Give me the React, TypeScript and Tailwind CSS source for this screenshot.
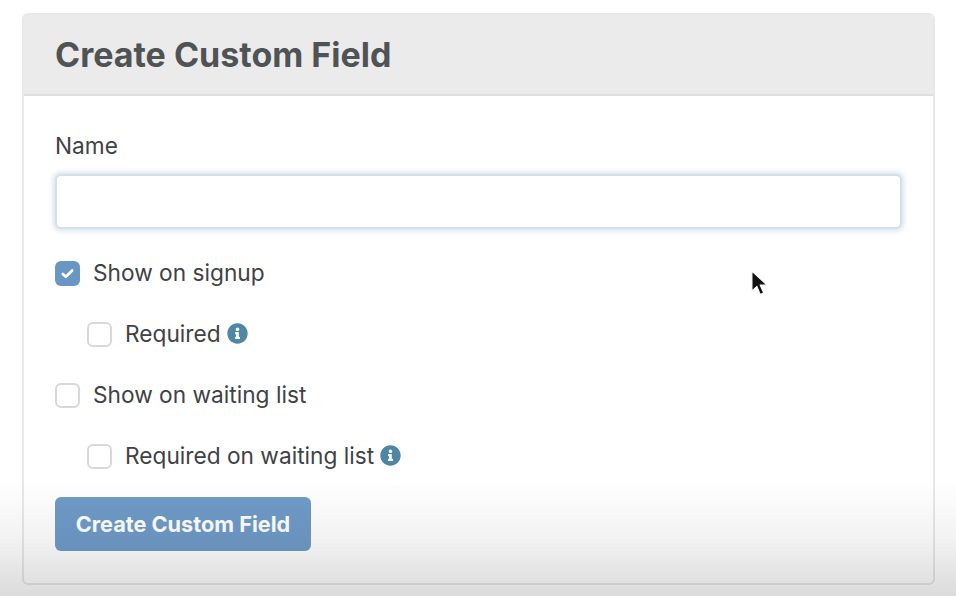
import React from 'react';

const InfoIcon = () => (
  <svg viewBox="0 0 512 512" className="w-[21px] h-[21px] ml-[6px] mt-[-1px]" fill="#4f86a4">
    <path d="M256 8C119 8 8 119 8 256s111 248 248 248 248-111 248-248S393 8 256 8zm0 100c24 0 44 20 44 44s-20 44-44 44-44-20-44-44 20-44 44-44zm60 268c0 7-5 12-12 12h-96c-7 0-12-5-12-12v-28c0-7 5-12 12-12h12v-62h-12c-7 0-12-5-12-12v-28c0-7 5-12 12-12h68c7 0 12 5 12 12v102h16c7 0 12 5 12 12v28z" />
  </svg>
);

const Check = ({ label, checked, info, indent }: { label: string; checked?: boolean; info?: boolean; indent?: boolean }) => (
  <div className={`flex items-center h-[26px] ${indent ? 'ml-[32px]' : ''}`}>
    {checked ? (
      <div className="w-[25px] h-[25px] rounded-[6px] bg-[#6a96c3] flex items-center justify-center shrink-0">
        <svg viewBox="0 0 16 16" className="w-[15px] h-[15px]" fill="none" stroke="#ffffff" strokeWidth="2.8" strokeLinecap="round" strokeLinejoin="round">
          <path d="M3 8.5l3.2 3L13 4.8" />
        </svg>
      </div>
    ) : (
      <div className="w-[25px] h-[25px] rounded-[6px] border-2 border-[#d8d8d8] bg-white shrink-0" />
    )}
    <span className="ml-[13px] text-[22.7px] leading-[26px] text-[#3f4246]">{label}</span>
    {info && <InfoIcon />}
  </div>
);

export default function App() {
  return (
    <div className="relative w-[956px] h-[596px] overflow-hidden bg-white pt-[13px] pl-[22px] font-['Inter','Liberation_Sans',sans-serif]">
      <div className="w-[913px] h-[572px] rounded-[6px] border-2 border-[#e8e8e8] bg-white overflow-hidden">
        <div className="h-[81px] bg-[#ebebeb] border-b-2 border-[#e0e0e0] pl-[31px] flex items-center">
          <h1 className="text-[34px] font-bold text-[#505356]">Create Custom Field</h1>
        </div>
        <div className="pl-[31px] pr-[31px] pt-[36px]">
          <div className="text-[22.7px] leading-[28px] text-[#3f4246]">Name</div>
          <input
            type="text"
            className="block mt-[14px] w-[847px] h-[55px] rounded-[6px] bg-white border-2 border-[#d5dfe9] shadow-[0_0_5px_2px_rgba(190,208,226,0.6)] outline-none"
          />
          <div className="mt-[31px] flex flex-col gap-[35px]">
            <Check label="Show on signup" checked />
            <Check label="Required" info indent />
            <Check label="Show on waiting list" />
            <Check label="Required on waiting list" info indent />
          </div>
          <button className="mt-[28px] w-[256px] h-[54px] rounded-[6px] bg-[#6f9bc8] text-white font-bold text-[21.7px] flex items-center justify-center">
            Create Custom Field
          </button>
        </div>
      </div>
      {/* video fade at the bottom */}
      <div className="absolute left-0 right-0 bottom-0 h-[116px] bg-gradient-to-b from-transparent via-[#0000000d] to-[#00000024] pointer-events-none" />
      <svg viewBox="0 0 20 30" className="absolute left-[750px] top-[270px] w-[19px] h-[29px]">
        <path d="M2 1v21l5.2-5 3.6 8.5 3.6-1.6-3.6-8.2H18z" fill="#111111" stroke="#ffffff" strokeWidth="1.2" />
      </svg>
    </div>
  );
}
